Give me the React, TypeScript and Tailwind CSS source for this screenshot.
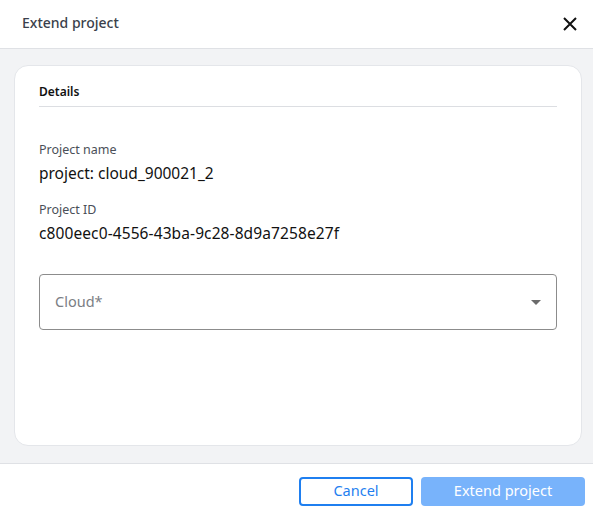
export default function App() {
  return (
    <div className="w-[593px] h-[513px] bg-white flex flex-col font-['Noto_Sans',sans-serif] text-[#1f2329]">
      {/* Header */}
      <div className="h-[49px] flex items-center justify-between pl-[22px] pr-[16px] pb-[3px] border-b border-[#dfe1e5] shrink-0">
        <span className="text-[14px] font-medium text-[#3a3f4b]">Extend project</span>
        <svg width="14" height="14" viewBox="0 0 14 14" className="mt-[2px]">
          <path d="M1 1L13 13M13 1L1 13" stroke="#111" strokeWidth="2" />
        </svg>
      </div>

      {/* Body */}
      <div className="flex-1 bg-[#f2f3f5] pl-[14px] pr-[11px] pt-[16px] pb-[17px]">
        <div className="h-full bg-white rounded-[14px] border border-[#e4e6ea] px-[24px] pt-[17px]">
          <div className="text-[12px] font-semibold text-[#111] pb-[5px] border-b border-[#dcdee2]">Details</div>

          <div className="mt-[35px] text-[12.5px] text-[#4a4f58] leading-[16px]">Project name</div>
          <div className="mt-[5px] text-[15.5px] text-[#111] leading-[20px]">project: cloud_900021_2</div>

          <div className="mt-[19px] text-[12.5px] text-[#4a4f58] leading-[16px]">Project ID</div>
          <div className="mt-[5px] text-[15.5px] text-[#111] leading-[20px] tracking-[0.1px]">c800eec0-4556-43ba-9c28-8d9a7258e27f</div>

          <div className="mt-[31px] h-[56px] rounded-[4px] border border-[#8c8c8c] flex items-center justify-between pl-[15px] pr-[15px]">
            <span className="text-[14.5px] text-[#7b7e84]">Cloud*</span>
            <svg width="10" height="5" viewBox="0 0 10 5">
              <path d="M0 0h10L5 5z" fill="#6b6b6b" />
            </svg>
          </div>
        </div>
      </div>

      {/* Footer */}
      <div className="h-[50px] border-t border-[#dfe1e5] flex items-center justify-end gap-[8px] pr-[8px] pt-[5px] shrink-0">
        <button className="w-[114px] h-[29px] rounded-[4px] border-2 border-[#1f7ff0] text-[14.5px] text-[#1f7ff0]">Cancel</button>
        <button className="w-[164px] h-[29px] rounded-[4px] bg-[#78b3fb] text-[14.5px] text-white">Extend project</button>
      </div>
    </div>
  );
}
